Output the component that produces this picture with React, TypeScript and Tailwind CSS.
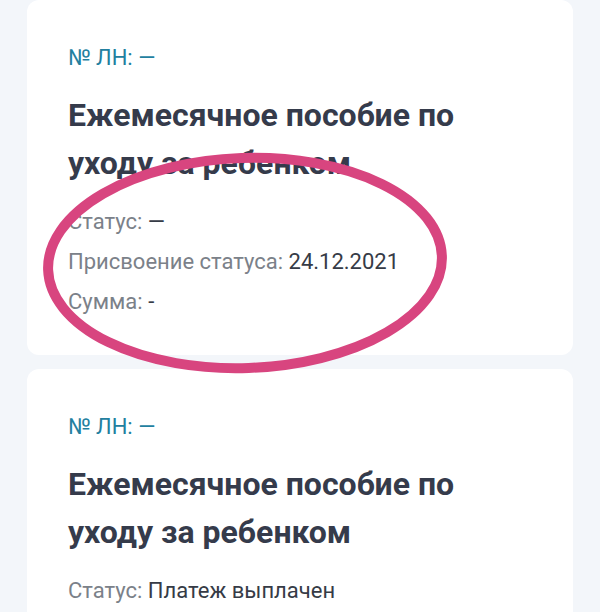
import React from "react";

interface Benefit {
  number: string;
  title: string;
  rows: { label: string; value: string }[];
}

const items: Benefit[] = [
  {
    number: "—",
    title: "Ежемесячное пособие по уходу за ребенком",
    rows: [
      { label: "Статус:", value: "—" },
      { label: "Присвоение статуса:", value: "24.12.2021" },
      { label: "Сумма:", value: "-" },
    ],
  },
  {
    number: "—",
    title: "Ежемесячное пособие по уходу за ребенком",
    rows: [{ label: "Статус:", value: "Платеж выплачен" }],
  },
];

function BenefitCard({ item }: { item: Benefit }) {
  return (
    <div className="shrink-0 bg-white rounded-[12px] px-[41px] pt-[44px] pb-[33px]">
      <p className="text-[22px] leading-[28px] text-[#23809f]">№ ЛН: {item.number}</p>
      <h2 className="mt-[19px] text-[32px] leading-[48px] font-bold text-[#353b4b] max-w-[430px]">
        {item.title}
      </h2>
      <div className="mt-[15px]">
        {item.rows.map((r, i) => (
          <p key={i} className="text-[22px] leading-[40px]">
            <span className="text-[#7b8189]">{r.label}</span>{" "}
            <span className="text-[#363b46]">{r.value}</span>
          </p>
        ))}
      </div>
    </div>
  );
}

export default function App() {
  return (
    <div
      className="relative h-[612px] bg-[#f3f6fa] px-[27px] flex flex-col gap-[14px] overflow-hidden"
      style={{ fontFamily: "Roboto, 'Noto Sans', sans-serif" }}
    >
      {items.map((it, i) => (
        <BenefitCard key={i} item={it} />
      ))}

      {/* hand-drawn highlight */}
      <svg className="absolute left-0 top-0 pointer-events-none" width="600" height="612">
        <ellipse
          cx="245"
          cy="263"
          rx="197"
          ry="105"
          fill="none"
          stroke="#d8457f"
          strokeWidth="10"
          transform="rotate(-2 245 263)"
        />
      </svg>
    </div>
  );
}
